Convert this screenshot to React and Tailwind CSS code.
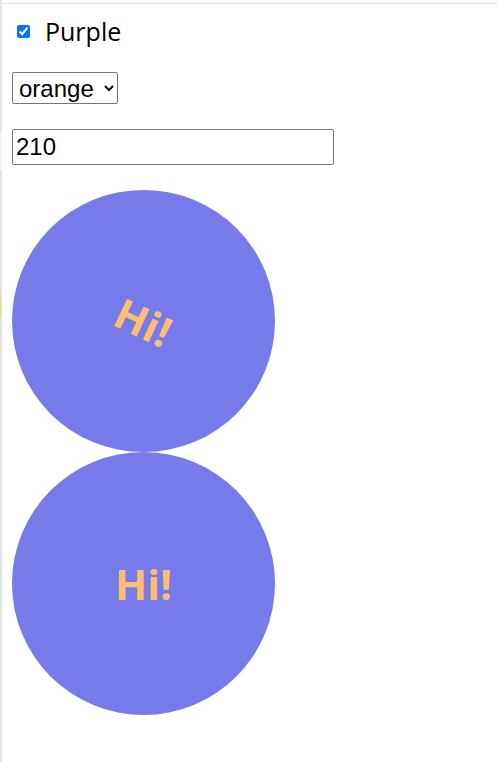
export default function App() {
  return (
    <div className="relative min-h-[762px] bg-white font-['Open_Sans','Liberation_Sans',sans-serif] text-black">
      {/* left edge strip */}
      <div className="absolute left-0 top-0 flex h-[762px] w-[2px] flex-col">
        <div className="h-[131px] bg-[#e3e3e3]" />
        <div className="h-[39px] bg-[#f3f3f3]" />
        <div className="h-[122px] bg-[#e3e3e3]" />
        <div className="h-[26px] bg-[#e6e2a4]" />
        <div className="flex-1 bg-[#e3e3e3]" />
      </div>
      <div className="absolute left-[2px] right-0 top-[3px] h-px bg-[#dcdcdc]" />

      <div className="flex flex-col items-start pl-3 pt-[19px]">
        <label className="flex h-6 items-center">
          <input type="checkbox" defaultChecked className="ml-[5px] mr-[15px] h-[13px] w-[13px] accent-[#0075ff]" />
          <span className="text-[25px] leading-6">Purple</span>
        </label>

        <select className="mt-[29px] h-[32px] w-[106px] rounded-[2px] border border-[#767676] pl-[2px] font-['Liberation_Sans',Arial,sans-serif] text-[24px] leading-7">
          <option>orange</option>
        </select>

        <input
          type="text"
          defaultValue="210"
          className="mt-[25px] h-[36px] w-[322px] rounded-[2px] border border-[#767676] px-[3px] font-['Liberation_Sans',Arial,sans-serif] text-[24px]"
        />

        <div className="mt-[25px] flex h-[262px] w-[263px] items-center justify-center rounded-full bg-[#777be9]">
          <span className="rotate-[25deg] text-[42px] font-bold text-[#fdbf6f]">Hi!</span>
        </div>
        <div className="flex h-[263px] w-[263px] items-center justify-center rounded-full bg-[#777be9]">
          <span className="text-[42px] font-bold text-[#fdbf6f]">Hi!</span>
        </div>
      </div>
    </div>
  );
}
